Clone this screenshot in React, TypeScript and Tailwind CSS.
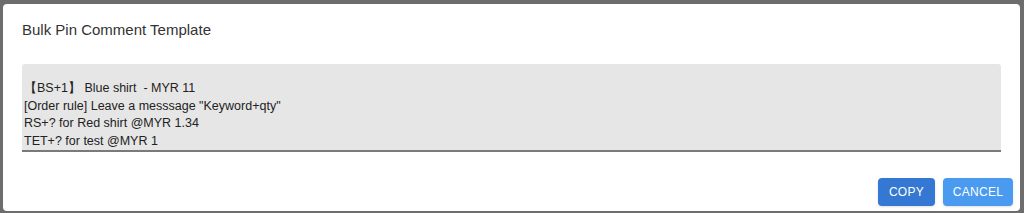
import React from "react";

export default function App() {
  return (
    <div className="w-[1024px] h-[213px] bg-[#6d6d6d] pl-[3px] pr-[4px] pt-[4px] overflow-hidden" style={{ fontFamily: '"Liberation Sans", Arial, sans-serif' }}>
      <div className="bg-white rounded-[4px] h-[207px] flex flex-col">
        <div className="px-[19px] pt-[16px] text-[15px] leading-[20px] text-[#333]">Bulk Pin Comment Template</div>
        <div className="mx-[19px] mt-[24px] bg-[#e6e6e6] rounded-t-[3px] border-b-[2px] border-[#7a7a7a] pt-[16px] pb-[0px] px-[2px] text-[12.5px] leading-[17.5px] text-[#222] whitespace-pre">
          {"【BS+1】 Blue shirt  - MYR 11\n[Order rule] Leave a messsage \"Keyword+qty\"\nRS+? for Red shirt @MYR 1.34\nTET+? for test @MYR 1"}
        </div>
        <div className="flex justify-end gap-[8px] pr-[7px] mt-[26px]">
          <button className="h-[28px] w-[57px] rounded-[4px] bg-[#3578d3] text-white text-[12px] tracking-[0.3px] shadow-sm">COPY</button>
          <button className="h-[28px] w-[70px] rounded-[4px] bg-[#4a9bf0] text-white text-[12px] tracking-[0.3px] shadow-sm">CANCEL</button>
        </div>
      </div>
    </div>
  );
}
